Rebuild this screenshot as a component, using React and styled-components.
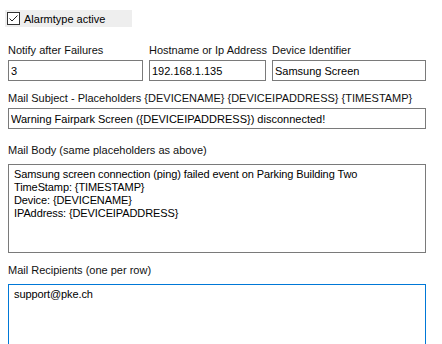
import React from "react";
import styled, { createGlobalStyle } from "styled-components";

const GlobalStyle = createGlobalStyle`
  body {
    margin: 0;
    background: #ffffff;
    font-family: "Liberation Sans", "DejaVu Sans", sans-serif;
    font-size: 11px;
    color: #1a1a1a;
  }
`;

const Form = styled.div`
  width: 442px;
  height: 344px;
  box-sizing: border-box;
  overflow: hidden;
  padding: 10px 16px 0 8px;
  display: flex;
  flex-direction: column;
`;

const CheckRow = styled.label`
  margin-left: -3px;
  width: 127px;
  height: 17px;
  flex-shrink: 0;
  background: #eeeeee;
  display: flex;
  align-items: center;
  gap: 4px;
  padding-left: 2px;
  box-sizing: border-box;
  color: #000;
`;

const Box = styled.span`
  width: 13px;
  height: 13px;
  box-sizing: border-box;
  border: 1px solid #333333;
  background: #ffffff;
  display: flex;
  align-items: center;
  justify-content: center;
`;

const Row = styled.div`
  display: flex;
  gap: 6px;
  flex-shrink: 0;
  margin-top: ${(p) => p.$top}px;
`;

const Field = styled.div`
  display: flex;
  flex-direction: column;
  flex-shrink: 0;
  gap: ${(p) => p.$gap}px;
  width: ${(p) => (p.$width ? `${p.$width}px` : "100%")};
  margin-top: ${(p) => p.$top || 0}px;
`;

const Label = styled.span`
  line-height: 14px;
  color: #111;
  white-space: nowrap;
`;

const TextBox = styled.input`
  box-sizing: border-box;
  width: 100%;
  height: 21px;
  margin: 0;
  padding: 0 2px;
  border: 1px solid #7a7a7a;
  background: #ffffff;
  font-family: inherit;
  font-size: 11px;
  color: #000;
  outline: none;
`;

const Memo = styled.textarea`
  box-sizing: border-box;
  width: 100%;
  height: ${(p) => p.$height}px;
  margin: 0;
  padding: 3px 5px;
  border: 1px solid ${(p) => (p.$focused ? "#0078d7" : "#7a7a7a")};
  background: #ffffff;
  font-family: inherit;
  font-size: 11px;
  line-height: 13px;
  letter-spacing: -0.1px;
  color: #000;
  resize: none;
  outline: none;
  overflow: hidden;
  display: block;
`;

const bodyText = `Samsung screen connection (ping) failed event on Parking Building Two
TimeStamp: {TIMESTAMP}
Device: {DEVICENAME}
IPAddress: {DEVICEIPADDRESS}`;

export default function App() {
  return (
    <>
      <GlobalStyle />
      <Form>
        <CheckRow>
          <Box>
            <svg width="11" height="11" viewBox="0 0 11 11">
              <polyline points="1.5,5.5 4,8 9.5,2.5" fill="none" stroke="#222" strokeWidth="1" />
            </svg>
          </Box>
          Alarmtype active
        </CheckRow>

        <Row $top={16}>
          <Field $gap={3} $width={135}>
            <Label>Notify after Failures</Label>
            <TextBox readOnly defaultValue="3" />
          </Field>
          <Field $gap={3} $width={117}>
            <Label>Hostname or Ip Address</Label>
            <TextBox readOnly defaultValue="192.168.1.135" />
          </Field>
          <Field $gap={3} $width={154}>
            <Label>Device Identifier</Label>
            <TextBox readOnly defaultValue="Samsung Screen" />
          </Field>
        </Row>

        <Field $gap={3} $top={10}>
          <Label>Mail Subject - Placeholders {"{DEVICENAME} {DEVICEIPADDRESS} {TIMESTAMP}"}</Label>
          <TextBox readOnly defaultValue="Warning Fairpark Screen ({DEVICEIPADDRESS}) disconnected!" />
        </Field>

        <Field $gap={7} $top={14}>
          <Label>Mail Body (same placeholders as above)</Label>
          <Memo readOnly $height={89} defaultValue={bodyText} />
        </Field>

        <Field $gap={7} $top={10}>
          <Label>Mail Recipients (one per row)</Label>
          <Memo readOnly $focused $height={80} defaultValue="support@pke.ch" />
        </Field>
      </Form>
    </>
  );
}
